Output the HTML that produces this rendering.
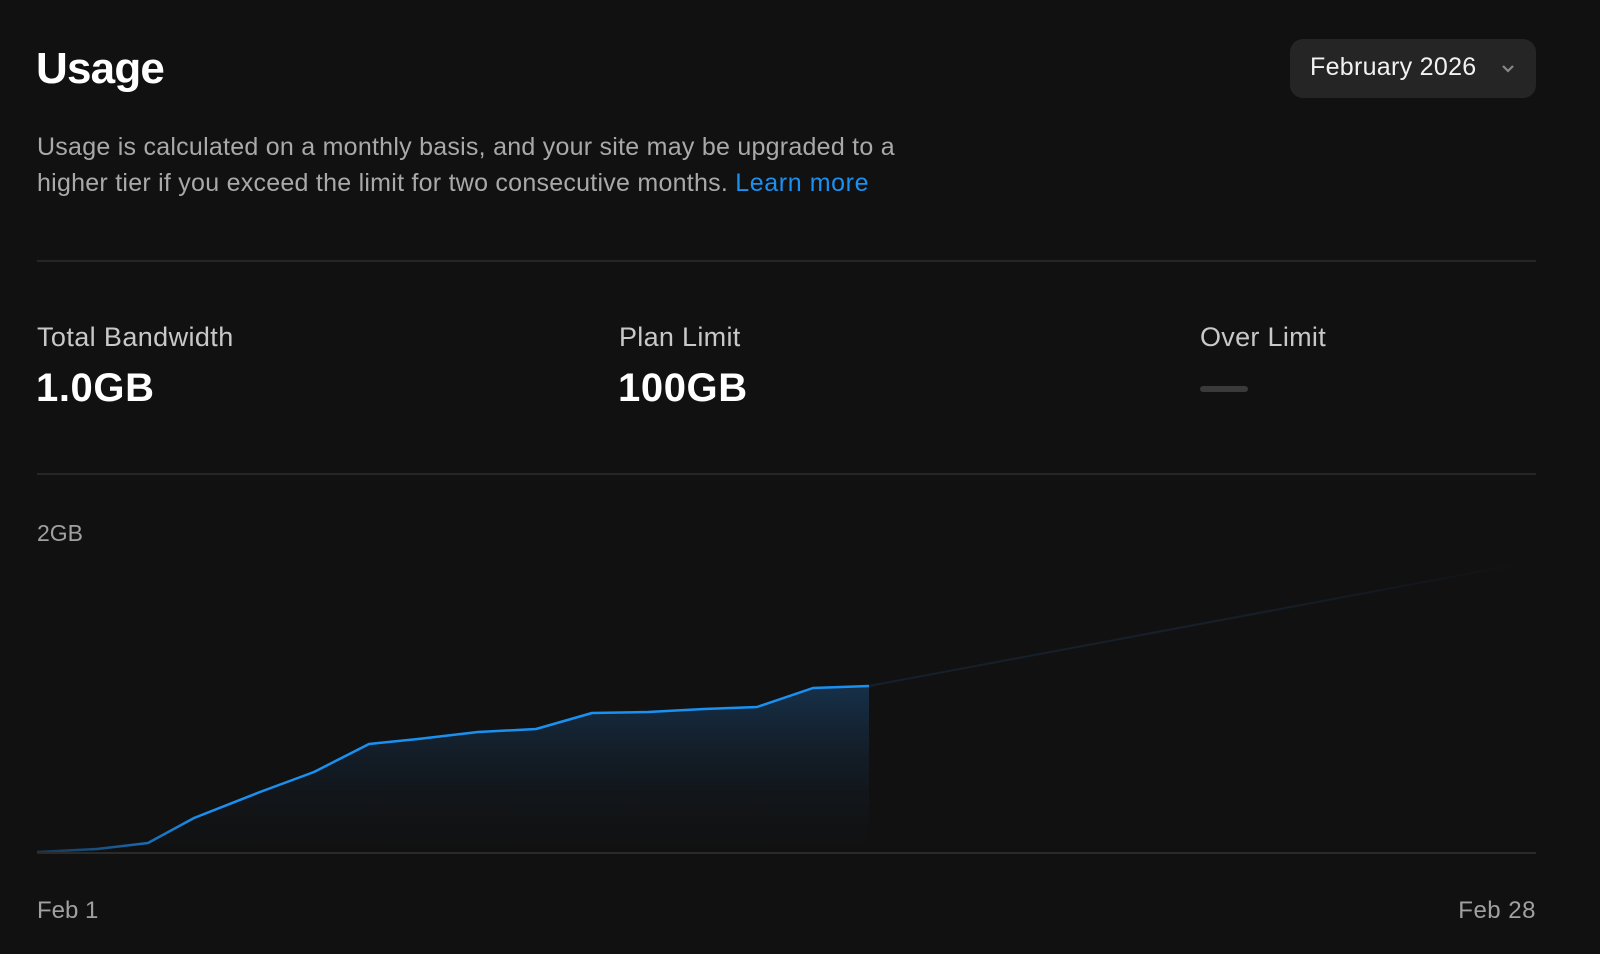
<!DOCTYPE html>
<html><head><style>
html,body{margin:0;background:#111112;width:1600px;height:954px;overflow:hidden;font-family:"Liberation Sans",sans-serif;}
.a{position:absolute;white-space:nowrap}
</style></head><body>
<div class="a" style="left:36px;top:44px;font-size:44px;font-weight:bold;color:#fff;letter-spacing:-0.8px">Usage</div>
<div class="a" style="left:1290px;top:39px;width:246px;height:59px;background:#252526;border-radius:13px"></div>
<div class="a" style="left:1310px;top:53px;font-size:25px;color:#f2f2f2;letter-spacing:0.3px">February 2026</div>
<svg class="a" style="left:1500px;top:63px" width="16" height="12"><path d="M3 3 L8 8 L13 3" stroke="#888" stroke-width="2.2" fill="none"/></svg>
<div class="a" style="left:37px;top:129px;font-size:25px;line-height:36px;color:#a9a9a9;letter-spacing:0.25px">Usage is calculated on a monthly basis, and your site may be upgraded to a<br>higher tier if you exceed the limit for two consecutive months. <span style="color:#1a90f0;letter-spacing:0.6px">Learn more</span></div>
<div class="a" style="left:37px;top:260px;width:1499px;height:2px;background:#262627"></div>
<div class="a" style="left:37px;top:322px;font-size:27px;color:#c8c8c8;letter-spacing:0.4px">Total Bandwidth</div>
<div class="a" style="left:619px;top:322px;font-size:27px;color:#c8c8c8;letter-spacing:0.3px">Plan Limit</div>
<div class="a" style="left:1200px;top:322px;font-size:27px;color:#c8c8c8;letter-spacing:0.3px">Over Limit</div>
<div class="a" style="left:36px;top:366px;font-size:40px;font-weight:bold;color:#fff;letter-spacing:0.6px">1.0GB</div>
<div class="a" style="left:618px;top:366px;font-size:40px;font-weight:bold;color:#fff;letter-spacing:0.6px">100GB</div>
<div class="a" style="left:1200px;top:386px;width:48px;height:6px;border-radius:3px;background:#3a3a3b"></div>
<div class="a" style="left:37px;top:473px;width:1499px;height:2px;background:#262627"></div>
<div class="a" style="left:37px;top:520px;font-size:23px;color:#a0a0a0">2GB</div>
<svg class="a" style="left:0;top:0" width="1600" height="954">
<defs><linearGradient id="g" x1="0" y1="0" x2="0" y2="1"><stop offset="0" stop-color="#1a4a78" stop-opacity="0.55"/><stop offset="1" stop-color="#111" stop-opacity="0.1"/></linearGradient>
<linearGradient id="l" x1="0" x2="1"><stop offset="0" stop-color="#1e4f80" stop-opacity="0.6"/><stop offset="0.2" stop-color="#1a90f0"/></linearGradient>
<linearGradient id="f" x1="0" x2="1"><stop offset="0" stop-color="#15202c"/><stop offset="0.6" stop-color="#161f29"/><stop offset="1" stop-color="#111"/></linearGradient></defs>
<path d="M869 686 L1531 562" stroke="url(#f)" stroke-width="2" fill="none"/>
<path d="M37 852 L97 849 L148 843 L194 818 L260 792 L314 772 L369 744 L418 739 L478 732 L536 729 L592 713 L648 712 L704 709 L757 707 L813 688 L869 686 L869 852 Z" fill="url(#g)"/>
<path d="M37 852 L97 849 L148 843 L194 818 L260 792 L314 772 L369 744 L418 739 L478 732 L536 729 L592 713 L648 712 L704 709 L757 707 L813 688 L869 686" stroke="url(#l)" stroke-width="2.5" fill="none" stroke-linejoin="round"/>
<rect x="37" y="852" width="1499" height="2" fill="#2a2a2b"/>
</svg>
<div class="a" style="left:37px;top:897px;font-size:24px;color:#a0a0a0">Feb 1</div>
<div class="a" style="right:64px;top:897px;font-size:24px;color:#a0a0a0;letter-spacing:0.5px">Feb 28</div>
</body></html>
